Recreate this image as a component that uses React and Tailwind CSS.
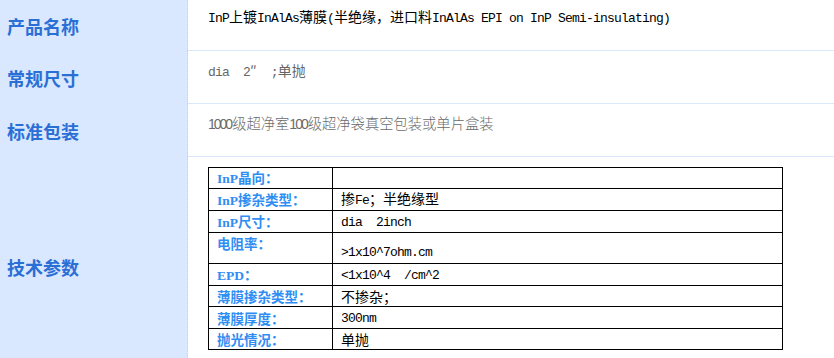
import React from "react";

const CJK = "font-['Noto_Sans_CJK_SC',sans-serif]";

// split a string into ascii / non-ascii runs so latin can take a narrow mono face
function Mixed({ text, latin, cjk }) {
  const parts = text.split(/([\x00-\x7f]+)/).filter(Boolean);
  return parts.map((p, i) =>
    /^[\x00-\x7f]+$/.test(p) ? (
      <span key={i} className={latin}>{p}</span>
    ) : (
      <span key={i} className={cjk}>{p}</span>
    )
  );
}

const monoLatin = "font-['Liberation_Mono',monospace] text-[13px] tracking-[-0.8px]";
const cjk14 = `${CJK} text-[14px]`;

const specs = [
  { label: "InP晶向：", value: "" },
  { label: "InP掺杂类型：", value: "掺Fe；半绝缘型" },
  { label: "InP尺寸：", value: "dia  2inch" },
  { label: "电阻率：", value: ">1x10^7ohm.cm", tall: true },
  { label: "EPD：", value: "<1x10^4  /cm^2" },
  { label: "薄膜掺杂类型：", value: "不掺杂；" },
  { label: "薄膜厚度：", value: "300nm" },
  { label: "抛光情况：", value: "单抛" },
];

function Label({ children }) {
  return (
    <div className="w-[188px] shrink-0 bg-[#d9e8ff] border-r border-dotted border-[#c3cfe2] flex items-center pl-[7px]">
      <span className={`${CJK} text-[18px] font-bold text-[#2a6fd6] leading-none`}>{children}</span>
    </div>
  );
}

export default function App() {
  return (
    <div className="w-[834px] h-[358px] overflow-hidden bg-white">
      <div className="flex h-[51px]">
        <Label>产品名称</Label>
        <div className="flex-1 border-b border-[#dbe7fa] pl-[20px] pt-[6px] whitespace-pre text-black leading-[20px]">
          <Mixed
            text="InP上镀InAlAs薄膜(半绝缘，进口料InAlAs EPI on InP Semi-insulating)"
            latin={monoLatin}
            cjk={cjk14}
          />
        </div>
      </div>

      <div className="flex h-[53px]">
        <Label>常规尺寸</Label>
        <div className="flex-1 border-b border-[#dbe7fa] pl-[20px] pt-[9px] whitespace-pre text-[#666] leading-[20px]">
          <Mixed text="dia  2″  ;单抛" latin={monoLatin} cjk={cjk14} />
        </div>
      </div>

      <div className="flex h-[53px]">
        <Label>标准包装</Label>
        <div className="flex-1 border-b border-[#dbe7fa] pl-[20px] pt-[9px] whitespace-pre text-[#6b6b6b] leading-[20px]">
          <Mixed
            text="1000级超净室100级超净袋真空包装或单片盒装"
            latin="font-['Liberation_Sans',sans-serif] text-[14px] tracking-[-2px] pr-[1px]"
            cjk={`${CJK} text-[14.3px] font-light`}
          />
        </div>
      </div>

      <div className="flex h-[219px]">
        <Label>技术参数</Label>
        <div className="flex-1 pl-[20px] pt-[10px]">
          <table className="border-collapse border border-black w-[575px]">
            <tbody>
              {specs.map((s) => (
                <tr key={s.label} className={s.tall ? "h-[31px]" : "h-[21px]"}>
                  <td
                    className={`w-[124px] border border-black pl-[8px] leading-[18px] text-[#2f8ef3] font-bold whitespace-nowrap ${
                      s.tall ? "align-top pt-[1px]" : "align-middle"
                    }`}
                  >
                    <Mixed
                      text={s.label}
                      latin="font-['Liberation_Serif',serif] text-[13.5px]"
                      cjk={`${CJK} text-[13.5px]`}
                    />
                  </td>
                  <td
                    className={`border border-black pl-[8px] leading-[18px] text-black whitespace-pre ${
                      s.tall ? "align-middle pt-[6px]" : "align-middle"
                    }`}
                  >
                    <Mixed text={s.value} latin={monoLatin} cjk={cjk14} />
                  </td>
                </tr>
              ))}
            </tbody>
          </table>
        </div>
      </div>
    </div>
  );
}
